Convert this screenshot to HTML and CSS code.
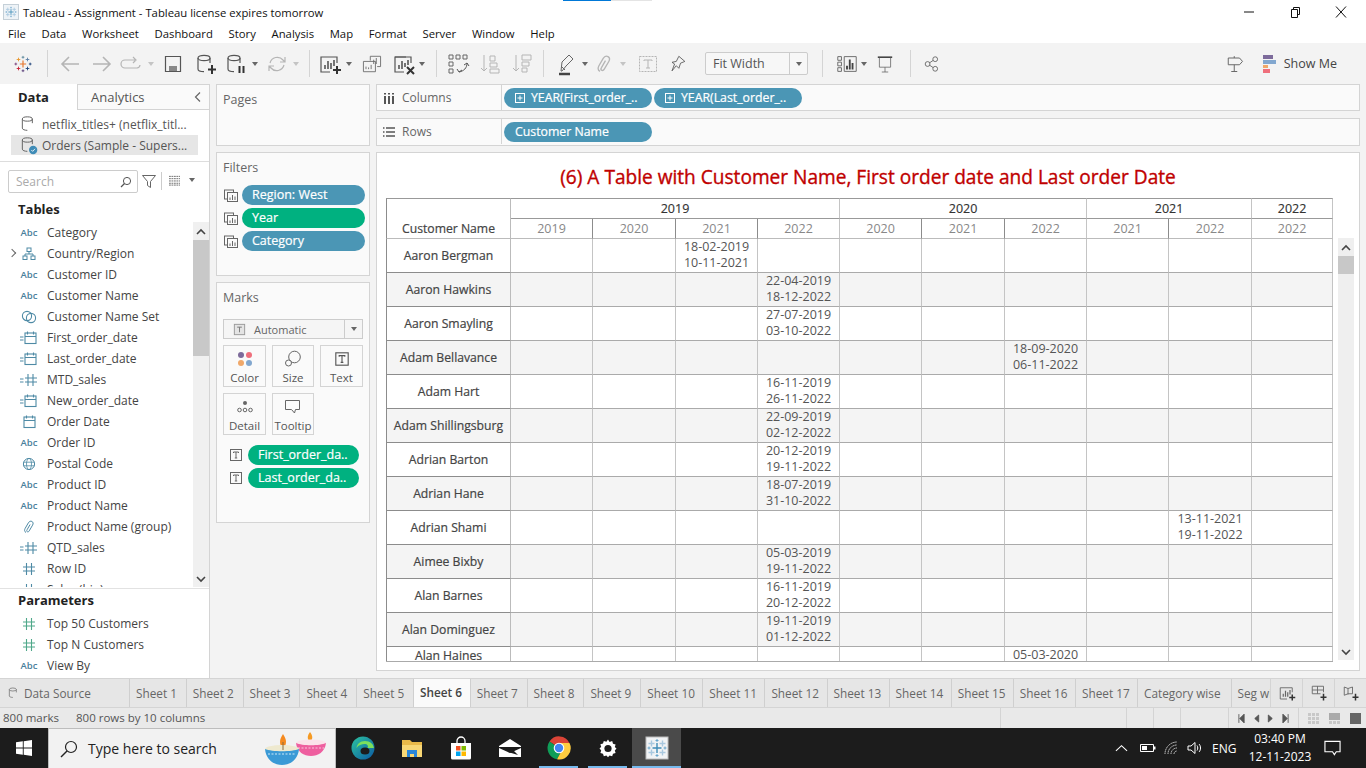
FILE: index.html
```html
<!DOCTYPE html>
<html lang="en">
<head>
<meta charset="utf-8">
<title>Tableau - Assignment</title>
<link rel="stylesheet" href="styles.css">
</head>
<body>
<svg class="defs" aria-hidden="true">
  <symbol id="cyl" viewBox="0 0 24 24"><ellipse cx="10" cy="6" rx="6" ry="2.6" fill="none" stroke="currentColor" stroke-width="1.2"/><path d="M4 6v11c0 1.6 3 2.6 6 2.6M16 6v5" fill="none" stroke="currentColor" stroke-width="1.2"/></symbol>
  <symbol id="cal" viewBox="0 0 18 18"><rect x="4" y="4" width="11" height="10.5" fill="none" stroke="currentColor" stroke-width="1.1"/><path d="M4 7.5h11M6.5 2.5v3M12.5 2.5v3" fill="none" stroke="currentColor" stroke-width="1.1"/></symbol>
  <symbol id="calx" viewBox="0 0 18 18"><rect x="5" y="4" width="11" height="10.5" fill="none" stroke="currentColor" stroke-width="1.1"/><path d="M5 7.5h11M7.5 2.5v3M13.5 2.5v3M0 8h3.5M0 11h3.5" fill="none" stroke="currentColor" stroke-width="1.1"/></symbol>
  <symbol id="hash" viewBox="0 0 18 18"><path d="M6.5 3v12M11.5 3v12M3 7h12M3 11h12" fill="none" stroke="currentColor" stroke-width="1.1"/></symbol>
  <symbol id="hashx" viewBox="0 0 18 18"><path d="M8 3v12M13 3v12M5 7h12M5 11h12M0 8h3.5M0 11h3.5" fill="none" stroke="currentColor" stroke-width="1.1"/></symbol>
  <symbol id="tree" viewBox="0 0 18 18"><rect x="7" y="3" width="4" height="3.5" fill="none" stroke="currentColor"/><rect x="3" y="11" width="4" height="3.5" fill="none" stroke="currentColor"/><rect x="11" y="11" width="4" height="3.5" fill="none" stroke="currentColor"/><path d="M9 6.5V9M5 11V9h8v2" fill="none" stroke="currentColor"/></symbol>
  <symbol id="set" viewBox="0 0 18 18"><circle cx="7" cy="8" r="4.6" fill="none" stroke="currentColor" stroke-width="1.1"/><circle cx="11" cy="10" r="4.6" fill="none" stroke="currentColor" stroke-width="1.1"/></symbol>
  <symbol id="globe" viewBox="0 0 18 18"><circle cx="9" cy="9" r="5.6" fill="none" stroke="currentColor"/><ellipse cx="9" cy="9" rx="2.5" ry="5.6" fill="none" stroke="currentColor" stroke-width=".8"/><path d="M3.5 7.2h11M3.5 10.8h11" fill="none" stroke="currentColor" stroke-width=".8"/></symbol>
  <symbol id="clip" viewBox="0 0 18 18"><path d="M6 14.5c-2-1-1.5-3-.8-4.2l3.2-5.5c1-1.6 2.4-2 3.6-1.3s1.5 2 .6 3.6l-3.4 5.8c-.6 1-1.4 1.2-2 .8s-.6-1.2-.1-2l3-5.2" fill="none" stroke="currentColor"/></symbol>
  <symbol id="filt" viewBox="0 0 16 16"><rect x="1.5" y="3" width="9" height="9" fill="none" stroke="currentColor"/><rect x="4.5" y="5.5" width="10" height="9" fill="#fafafa" stroke="currentColor"/><path d="M7 13V10.5M9.5 13V8M12 13V9.5" stroke="currentColor"/></symbol>
  <symbol id="ticon" viewBox="0 0 16 16"><rect x="2.5" y="2.5" width="11" height="11" fill="none" stroke="currentColor"/><path d="M5.5 6V5h5v1M8 5v6M6.8 11h2.400" fill="none" stroke="currentColor"/></symbol>
  <symbol id="plusbox" viewBox="0 0 12 12"><rect x="1.5" y="1.5" width="9" height="9" fill="none" stroke="currentColor"/><path d="M6 3.5v5M3.5 6h5" stroke="currentColor"/></symbol>
  <symbol id="mini" viewBox="0 0 24 24"><path d="M19 11V5H3v15h9" fill="none" stroke="currentColor" stroke-width="1.2"/><path d="M7 17v-4M10 17V9M13 17v-6M16 14V8" stroke="currentColor" stroke-width="1.6"/><path d="M19 14v8M15 18h8" stroke="#333" stroke-width="2"/></symbol>
  <symbol id="snow" viewBox="0 0 24 24"><path d="M6.500 4.500v6M3.500 7.500h6M17.500 4.500v6M14.500 7.500h6M6.500 13.500v6M3.500 16.500h6M17.500 13.500v6M14.500 16.500h6" stroke="#a9c8df" stroke-width="1.400"/><path d="M12 3v3M10.500 4.500h3M12 18v3M10.500 19.500h3M2.500 12h3M4 10.500v3M18.500 12h3M20 10.500v3" stroke="#6aa6cc"/><path d="M12 7v10M7.500 12h9" stroke="#3f8cb7" stroke-width="1.400"/></symbol>
</svg>

<i class="blue-line"></i><i class="gray-line"></i>

<header class="titlebar">
  <svg class="app-ico" viewBox="0 0 16 16"><rect x=".5" y=".5" width="15" height="15" fill="#eef3f7" stroke="#c5d0d8"/><svg x="1" y="1" width="14" height="14" viewBox="0 0 24 24"><use href="#snow"/></svg></svg>
  <span class="app-title">Tableau - Assignment - Tableau license expires tomorrow</span>
  <span class="win-ctl">
    <svg viewBox="0 0 12 12"><path d="M1 6h10" stroke="#111"/></svg>
    <svg viewBox="0 0 12 12"><path d="M2.500 3.500h6v8h-6zM4.500 3.500V1.500h6v7h-2" fill="none" stroke="#111"/></svg>
    <svg viewBox="0 0 12 12"><path d="M1 .5l10 11M11 .5l-10 11" stroke="#111"/></svg>
  </span>
</header>

<nav class="menubar">
  <span>File</span><span>Data</span><span>Worksheet</span><span>Dashboard</span><span>Story</span><span>Analysis</span><span>Map</span><span>Format</span><span>Server</span><span>Window</span><span>Help</span>
</nav>

<div class="toolbar">
  <svg class="logo" viewBox="0 0 20 20"><path d="M10 6v8M6.500 10h7" stroke="#e8762d" stroke-width="1.300"/><path d="M5 3v4M3 5h4" stroke="#e8962d"/><path d="M15 3v4M13 5h4" stroke="#5a7fa6"/><path d="M5 13v4M3 15h4" stroke="#c72035"/><path d="M15 13v4M13 15h4" stroke="#1f447a"/><path d="M10 1v3M8.500 2.500h3" stroke="#59879b"/><path d="M10 16v3M8.500 17.500h3" stroke="#5a3f7a"/><path d="M2 8.500v3M.5 10h3" stroke="#7b3f7a"/><path d="M18 8.500v3M16.500 10h3" stroke="#1f447a"/></svg>
  <i class="sep"></i>
  <svg class="ic dim m10" viewBox="0 0 24 24"><path d="M21 12H5M11 5l-7 7 7 7" fill="none" stroke="currentColor" stroke-width="1.600"/></svg>
  <svg class="ic dim m8" viewBox="0 0 24 24"><path d="M3 12h16M13 5l7 7-7 7" fill="none" stroke="currentColor" stroke-width="1.600"/></svg>
  <svg class="ic dim m5" viewBox="0 0 24 24"><path d="M16 8H6a3.500 3.500 0 0 0 0 8h12a3.500 3.500 0 0 0 3-3M14 5l3 3-3 3" fill="none" stroke="currentColor" stroke-width="1.200"/></svg>
  <i class="caret dim-c m5"></i>
  <svg class="ic m7" viewBox="0 0 24 24"><path d="M4.500 4.500h15v15h-15z" fill="none" stroke="#555" stroke-width="1.200"/><path d="M8 19v-5h8v5M11 16h4v3h-4z" fill="#888"/></svg>
  <svg class="ic m9" viewBox="0 0 24 24"><use href="#cyl" color="#555"/><path d="M18 13v9M14 17.500h8" stroke="#333" stroke-width="2"/></svg>
  <svg class="ic m6" viewBox="0 0 24 24"><use href="#cyl" color="#555"/><path d="M15.500 14v7M19.500 14v7" stroke="#333" stroke-width="2"/></svg>
  <i class="caret m4"></i>
  <svg class="ic dim m7" viewBox="0 0 24 24"><path d="M5 11a7.500 7.500 0 0 1 13-3l2 2M19 13a7.500 7.500 0 0 1-13 3l-2-2M20 5v5h-5M4 19v-5h5" fill="none" stroke="currentColor" stroke-width="1.200"/></svg>
  <i class="caret dim-c m4"></i>
  <i class="sep m10"></i>
  <svg class="ic m8" viewBox="0 0 24 24"><use href="#mini" color="#555"/></svg>
  <i class="caret m4"></i>
  <svg class="ic m8" viewBox="-2 -2 28 28"><path d="M10 8V3h12v12h-4M2 9h14v12H2z" fill="#f3f3f3" stroke="#666"/><path d="M14 12V7M17 12V5M5 18v-3M8 18v-2M11 18v-5" stroke="#666"/></svg>
  <svg class="ic m8" viewBox="0 0 24 24"><path d="M14 5H3v15h9" fill="none" stroke="#555" stroke-width="1.200"/><path d="M19 11V5H3" fill="none" stroke="#555" stroke-width="1.200"/><path d="M7 17v-4M10 17V9M13 15v-4M16 13V8" stroke="#555" stroke-width="1.600"/><path d="M15 15l7 7M22 15l-7 7" stroke="#333" stroke-width="2"/></svg>
  <i class="caret m3"></i>
  <i class="sep m11"></i>
  <svg class="ic m9" viewBox="0 0 24 24"><path d="M3 3h4v4H3zM10 3h4v4h-4zM17 3h4v4h-4zM3 10h4v4H3zM3 17h4v4H3z" fill="none" stroke="#666"/><path d="M21 11c0 5-3 8-8 9M11 17l2 3 3-2M18 13l3-2 2 3" fill="none" stroke="#555"/></svg>
  <svg class="ic dim m8" viewBox="0 0 24 24"><path d="M6 3v16M3 16l3 3 3-3M12 4h5v5h-5zM12 11h7v4h-7zM12 17h9v4h-9z" fill="none" stroke="currentColor"/></svg>
  <svg class="ic dim m8" viewBox="0 0 24 24"><path d="M6 3v16M3 16l3 3 3-3M12 3h9v5h-9zM12 10h7v4h-7zM12 16h5v4h-5z" fill="none" stroke="currentColor"/></svg>
  <i class="sep m9"></i>
  <svg class="ic m10" viewBox="0 0 24 24"><path d="M8 19l-1 0L8 10l7-7 4 4-7 7zM8 15l3 3" fill="none" stroke="#666"/><path d="M5 22h11" stroke="#444" stroke-width="2.500"/></svg>
  <i class="caret m4"></i>
  <svg class="ic dim m4" viewBox="0 0 24 24"><use href="#clip" color="#b5b5b5"/></svg>
  <i class="caret dim-c m4"></i>
  <svg class="ic dim m10" viewBox="0 0 24 24"><rect x="3.500" y="4.500" width="17" height="15" fill="none" stroke="currentColor" stroke-dasharray="2 1"/><path d="M8 9V8h8v1M12 8v8M10 16h4" fill="none" stroke="currentColor"/></svg>
  <svg class="ic m6" viewBox="-2 -2 28 28"><path d="M13 3l7 6-5 2-2 6-3-3-5 6 3-8-3-2 5-1z" fill="none" stroke="#555"/></svg>
  <div class="fit"><span>Fit Width</span><b><i class="caret"></i></b></div>
  <i class="sep m14"></i>
  <svg class="ic m12" viewBox="-1 -1 26 26"><path d="M2 4h4v4H2zM2 10h4v4H2zM2 16h4v4H2zM9 4h13v16H9z" fill="none" stroke="#666"/><path d="M12 18v-4M15 18V7M18 18v-7" stroke="#444" stroke-width="2"/></svg>
  <i class="caret m2"></i>
  <svg class="ic m6" viewBox="-3 -3 30 30"><path d="M3 3.500h18" stroke="#444" stroke-width="2"/><path d="M5 4v12h14V4M12 16v6M8 22h8" fill="none" stroke="#666"/></svg>
  <i class="sep m13"></i>
  <svg class="ic m9" viewBox="-3 -3 30 30"><circle cx="6.500" cy="12" r="3" fill="none" stroke="#555"/><circle cx="16" cy="6" r="3" fill="none" stroke="#555"/><circle cx="16" cy="18" r="3" fill="none" stroke="#555"/><path d="M9 10.500l4.500-3M9 13.500l4.500 3" stroke="#555"/></svg>
  <svg class="ic push" viewBox="-4 -4 32 32"><path d="M3 4h15l4 4.500-4 4.500H3zM11 1.500V4M11 13v9M7 22h8" fill="none" stroke="#666" stroke-width="1.300"/></svg>
  <span class="showme"><svg viewBox="0 0 14 20"><rect x="0" y="1" width="10" height="4" fill="#7d6b9b"/><rect x="0" y="6" width="13" height="4" fill="#82a7cf"/><rect x="0" y="11" width="5" height="3" fill="#f0a86a"/><rect x="0" y="15" width="7" height="4" fill="#ef6f7c"/></svg>Show Me</span>
</div>

<main class="main">
  <aside class="side">
    <div class="side-tabs"><span class="tab-data">Data</span><span class="tab-an">Analytics<svg viewBox="0 0 10 12"><path d="M7 1.500L2.500 6 7 10.500" fill="none" stroke="#666" stroke-width="1.200"/></svg></span></div>
    <div class="sources">
      <div class="src"><svg viewBox="0 0 24 24"><use href="#cyl" color="#666"/></svg>netflix_titles+ (netflix_titl...</div>
      <div class="src on"><svg viewBox="0 0 24 24"><use href="#cyl" color="#666"/><circle cx="17" cy="18" r="5" fill="#3f8cb7"/><path d="M14.800 18l1.600 1.600 2.800-3" fill="none" stroke="#fff"/></svg>Orders (Sample - Supers...</div>
    </div>
    <div class="search-row">
      <div class="search"><span>Search</span><svg viewBox="0 0 14 14"><circle cx="8" cy="6" r="3.600" fill="none" stroke="#555"/><path d="M5.500 8.500L2 12" stroke="#555" stroke-width="1.300"/></svg></div>
      <svg class="funnel" viewBox="0 0 16 16"><path d="M1.500 2.500h13l-5 6v6l-3-2v-4z" fill="none" stroke="#666"/></svg>
      <i class="vsep"></i>
      <svg class="lines" viewBox="0 0 14 12"><path d="M1 1.500h12M1 4h12M1 6.500h12M1 9h12M1 11h12" stroke="#666" stroke-dasharray="2 .7"/></svg>
      <i class="caret"></i>
    </div>
    <h3 class="sec">Tables</h3>
    <div class="fields">
      <div class="list">
        <div class="f"><b class="ab">Abc</b>Category</div>
        <div class="f ex"><svg viewBox="0 0 18 18"><use href="#tree"/></svg>Country/Region</div>
        <div class="f"><b class="ab">Abc</b>Customer ID</div>
        <div class="f"><b class="ab">Abc</b>Customer Name</div>
        <div class="f"><svg viewBox="0 0 18 18"><use href="#set"/></svg>Customer Name Set</div>
        <div class="f"><svg viewBox="0 0 18 18"><use href="#calx"/></svg>First_order_date</div>
        <div class="f"><svg viewBox="0 0 18 18"><use href="#calx"/></svg>Last_order_date</div>
        <div class="f"><svg viewBox="0 0 18 18"><use href="#hashx"/></svg>MTD_sales</div>
        <div class="f"><svg viewBox="0 0 18 18"><use href="#calx"/></svg>New_order_date</div>
        <div class="f"><svg viewBox="0 0 18 18"><use href="#cal"/></svg>Order Date</div>
        <div class="f"><b class="ab">Abc</b>Order ID</div>
        <div class="f"><svg viewBox="0 0 18 18"><use href="#globe"/></svg>Postal Code</div>
        <div class="f"><b class="ab">Abc</b>Product ID</div>
        <div class="f"><b class="ab">Abc</b>Product Name</div>
        <div class="f"><svg viewBox="0 0 18 18"><use href="#clip"/></svg>Product Name (group)</div>
        <div class="f"><svg viewBox="0 0 18 18"><use href="#hashx"/></svg>QTD_sales</div>
        <div class="f"><svg viewBox="0 0 18 18"><use href="#hash"/></svg>Row ID</div>
        <div class="f"><svg viewBox="0 0 18 18"><use href="#hash"/></svg>Sales (bin)</div>
      </div>
      <div class="sb sb-side">
        <svg viewBox="0 0 12 8"><path d="M2 6l4-4 4 4" fill="none" stroke="#444" stroke-width="1.600"/></svg>
        <i class="thumb"></i>
        <svg class="down" viewBox="0 0 12 8"><path d="M2 2l4 4 4-4" fill="none" stroke="#444" stroke-width="1.600"/></svg>
      </div>
    </div>
    <h3 class="sec params">Parameters</h3>
    <div class="f gr"><svg viewBox="0 0 18 18"><use href="#hash"/></svg>Top 50 Customers</div>
    <div class="f gr"><svg viewBox="0 0 18 18"><use href="#hash"/></svg>Top N Customers</div>
    <div class="f"><b class="ab">Abc</b>View By</div>
  </aside>

  <div class="work">
    <div class="cards">
      <section class="card pages"><h4>Pages</h4></section>
      <section class="card filters"><h4>Filters</h4>
        <div class="frow"><svg viewBox="0 0 16 16"><use href="#filt"/></svg><span class="pill blue">Region: West</span></div>
        <div class="frow"><svg viewBox="0 0 16 16"><use href="#filt"/></svg><span class="pill green">Year</span></div>
        <div class="frow"><svg viewBox="0 0 16 16"><use href="#filt"/></svg><span class="pill blue">Category</span></div>
      </section>
      <section class="card marks"><h4>Marks</h4>
        <div class="mtype"><svg viewBox="0 0 16 16"><rect x="2.500" y="2.500" width="11" height="11" fill="#e4e4e4" stroke="#999"/><path d="M5.500 5.500h5M8 5.500v5.500" stroke="#777"/></svg><span>Automatic</span><b><i class="caret"></i></b></div>
        <div class="mbtns">
          <div class="mb"><svg viewBox="0 0 18 18"><circle cx="5" cy="5" r="3" fill="#7d6b9b"/><circle cx="13" cy="5" r="3" fill="#ef6f7c"/><circle cx="5" cy="13" r="3" fill="#f0a86a"/><circle cx="13" cy="13" r="3" fill="#82a7cf"/></svg>Color</div>
          <div class="mb"><svg viewBox="0 0 18 18"><circle cx="10.500" cy="7" r="5.800" fill="none" stroke="#666"/><circle cx="4.500" cy="13" r="3" fill="#fafafa" stroke="#666"/></svg>Size</div>
          <div class="mb"><svg viewBox="0 0 16 16"><use href="#ticon" color="#555"/></svg>Text</div>
          <div class="mb"><svg viewBox="0 0 18 18"><circle cx="9" cy="5" r="2" fill="#666"/><circle cx="3.500" cy="12" r="1.800" fill="none" stroke="#666"/><circle cx="9" cy="12" r="1.800" fill="none" stroke="#666"/><circle cx="14.500" cy="12" r="1.800" fill="none" stroke="#666"/></svg>Detail</div>
          <div class="mb"><svg viewBox="0 0 18 18"><path d="M1.500 2.500h14v9h-4l-1 3.500-3-3.500h-6z" fill="none" stroke="#666"/></svg>Tooltip</div>
        </div>
        <div class="frow mrow"><svg viewBox="0 0 16 16"><use href="#ticon" color="#666"/></svg><span class="pill green">First_order_da..</span></div>
        <div class="frow mrow"><svg viewBox="0 0 16 16"><use href="#ticon" color="#666"/></svg><span class="pill green">Last_order_da..</span></div>
      </section>
    </div>

    <div class="stage">
      <div class="shelf col"><div class="sl"><svg viewBox="0 0 12 12"><path d="M2 4v8M6 4v8M10 4v8" stroke="#555" stroke-width="2"/><path d="M2 1v1.500M6 1v1.500M10 1v1.500" stroke="#555" stroke-width="2"/></svg>Columns</div>
        <div class="sp"><span class="pill blue w148"><svg viewBox="0 0 12 12"><use href="#plusbox"/></svg>YEAR(First_order_..</span><span class="pill blue w148"><svg viewBox="0 0 12 12"><use href="#plusbox"/></svg>YEAR(Last_order_..</span></div></div>
      <div class="shelf row"><div class="sl"><svg viewBox="0 0 12 12"><path d="M3 2h9M3 6h9M3 10h9M0 2h1.500M0 6h1.500M0 10h1.500" stroke="#555" stroke-width="1.500"/></svg>Rows</div>
        <div class="sp"><span class="pill blue w148 cust">Customer Name</span></div></div>

      <section class="view">
        <h1>(6) A Table with Customer Name, First order date and Last order Date</h1>
        <div class="vbody">
          <div class="tclip">
            <table>
              <colgroup><col class="c0"><col class="n"><col class="w"><col class="n"><col class="n"><col class="n"><col class="w"><col class="n"><col class="n"><col class="w"><col class="l"></colgroup>
              <thead>
                <tr class="h1"><th class="cn" rowspan="2">Customer Name</th><th colspan="4">2019</th><th colspan="3">2020</th><th colspan="2">2021</th><th>2022</th></tr>
                <tr class="h2"><th class="dk">2019</th><th class="dk">2020</th><th class="dk">2021</th><th>2022</th><th class="dk">2020</th><th class="dk">2021</th><th>2022</th><th class="dk">2021</th><th>2022</th><th>2022</th></tr>
              </thead>
              <tbody>
                <tr><th>Aaron Bergman</th><td></td><td></td><td>18-02-2019<br>10-11-2021</td><td></td><td></td><td></td><td></td><td></td><td></td><td></td></tr>
                <tr><th>Aaron Hawkins</th><td></td><td></td><td></td><td>22-04-2019<br>18-12-2022</td><td></td><td></td><td></td><td></td><td></td><td></td></tr>
                <tr><th>Aaron Smayling</th><td></td><td></td><td></td><td>27-07-2019<br>03-10-2022</td><td></td><td></td><td></td><td></td><td></td><td></td></tr>
                <tr><th>Adam Bellavance</th><td></td><td></td><td></td><td></td><td></td><td></td><td>18-09-2020<br>06-11-2022</td><td></td><td></td><td></td></tr>
                <tr><th>Adam Hart</th><td></td><td></td><td></td><td>16-11-2019<br>26-11-2022</td><td></td><td></td><td></td><td></td><td></td><td></td></tr>
                <tr><th>Adam Shillingsburg</th><td></td><td></td><td></td><td>22-09-2019<br>02-12-2022</td><td></td><td></td><td></td><td></td><td></td><td></td></tr>
                <tr><th>Adrian Barton</th><td></td><td></td><td></td><td>20-12-2019<br>19-11-2022</td><td></td><td></td><td></td><td></td><td></td><td></td></tr>
                <tr><th>Adrian Hane</th><td></td><td></td><td></td><td>18-07-2019<br>31-10-2022</td><td></td><td></td><td></td><td></td><td></td><td></td></tr>
                <tr><th>Adrian Shami</th><td></td><td></td><td></td><td></td><td></td><td></td><td></td><td></td><td>13-11-2021<br>19-11-2022</td><td></td></tr>
                <tr><th>Aimee Bixby</th><td></td><td></td><td></td><td>05-03-2019<br>19-11-2022</td><td></td><td></td><td></td><td></td><td></td><td></td></tr>
                <tr><th>Alan Barnes</th><td></td><td></td><td></td><td>16-11-2019<br>20-12-2022</td><td></td><td></td><td></td><td></td><td></td><td></td></tr>
                <tr><th>Alan Dominguez</th><td></td><td></td><td></td><td>19-11-2019<br>01-12-2022</td><td></td><td></td><td></td><td></td><td></td><td></td></tr>
                <tr class="cut"><th>Alan Haines</th><td></td><td></td><td></td><td></td><td></td><td></td><td>05-03-2020</td><td></td><td></td><td></td></tr>
              </tbody>
            </table>
          </div>
          <div class="sb sb-view">
            <svg viewBox="0 0 12 8"><path d="M2 6l4-4 4 4" fill="none" stroke="#444" stroke-width="1.600"/></svg>
            <i class="thumb"></i>
            <svg class="down" viewBox="0 0 12 8"><path d="M2 2l4 4 4-4" fill="none" stroke="#444" stroke-width="1.600"/></svg>
          </div>
        </div>
      </section>
    </div>
  </div>
</main>

<div class="tabs">
  <div class="tablist">
    <span class="t ds"><svg viewBox="0 0 24 24"><use href="#cyl" color="#666"/></svg>Data Source</span><span class="t">Sheet 1</span><span class="t">Sheet 2</span><span class="t">Sheet 3</span><span class="t">Sheet 4</span><span class="t">Sheet 5</span><span class="t on">Sheet 6</span><span class="t">Sheet 7</span><span class="t">Sheet 8</span><span class="t">Sheet 9</span><span class="t">Sheet 10</span><span class="t">Sheet 11</span><span class="t">Sheet 12</span><span class="t">Sheet 13</span><span class="t">Sheet 14</span><span class="t">Sheet 15</span><span class="t">Sheet 16</span><span class="t">Sheet 17</span><span class="t cw">Category wise</span><span class="t">Seg wise</span>
  </div>
  <span class="ta"><svg viewBox="0 0 24 24"><use href="#mini" color="#666"/></svg></span>
  <span class="ta"><svg viewBox="0 0 24 24"><path d="M14 13H3V3h15v8M3 8h15M10 3v10" fill="none" stroke="#666" stroke-width="1.200"/><path d="M18 13v9M14 17.500h8" stroke="#333" stroke-width="2"/></svg></span>
  <span class="ta"><svg viewBox="0 0 24 24"><path d="M3 4l5 2 6-2v9H8l-5 2zM8 6v8" fill="none" stroke="#666" stroke-width="1.200"/><path d="M18 13v9M14 17.500h8" stroke="#333" stroke-width="2"/></svg></span>
</div>

<div class="status">
  <span class="st1">800 marks</span><span class="st2">800 rows by 10 columns</span>
  <i class="st-fill"></i>
  <i class="seg s126"></i><i class="seg s27"></i><i class="seg s27"></i><i class="seg s48"></i>
  <span class="navs">
    <svg viewBox="0 0 8 10"><path d="M1 0v10M7 0v10L2 5z" stroke="#555" fill="#555"/></svg>
    <svg viewBox="0 0 8 10"><path d="M6.500 1v8L2 5z" fill="#555" stroke="#555"/></svg>
    <svg viewBox="0 0 8 10"><path d="M1.500 1v8L6 5z" fill="#555" stroke="#555"/></svg>
    <svg viewBox="0 0 8 10"><path d="M7 0v10M1 0v10l5-5z" stroke="#555" fill="#555"/></svg>
  </span>
  <span class="views">
    <svg viewBox="0 0 11 11"><path d="M0 0h3v3H0zM4 0h3v3H4zM8 0h3v3H8zM0 4h3v3H0zM4 4h3v3H4zM8 4h3v3H8zM0 8h3v3H0zM4 8h3v3H4zM8 8h3v3H8z" fill="#c8c8c8"/></svg>
    <svg viewBox="0 0 11 11"><path d="M0 0h11v7H0z" fill="#aaa"/><path d="M0 8h3v3H0zM4 8h3v3H4zM8 8h3v3H8z" fill="#c8c8c8"/></svg>
    <svg viewBox="0 0 11 11"><path d="M0 0h11v11H0z" fill="#666"/></svg>
  </span>
</div>

<footer class="taskbar">
  <svg class="start" viewBox="0 0 16 16"><path d="M0 2.300l6.800-1v6.200H0zM7.700 1.200L16 0v7.500H7.700zM0 8.500h6.800v6.200l-6.800-1zM7.700 8.500H16V16l-8.300-1.200z" fill="#fff"/></svg>
  <div class="tsearch">
    <svg viewBox="0 0 18 18"><circle cx="11" cy="7" r="5.500" fill="none" stroke="#222" stroke-width="1.200"/><path d="M7 11l-6 6" stroke="#222" stroke-width="1.400"/></svg>
    <span>Type here to search</span>
    <svg class="diya" viewBox="0 0 62 34"><path d="M45 0c3 4 3 7 0 10-3-3-3-6 0-10z" fill="#f59a23"/><ellipse cx="46" cy="11" rx="15" ry="3.500" fill="#fbe3ea"/><path d="M31 11c1 9 8 13 15 13s14-4 15-13c-6 3-24 3-30 0z" fill="#ee5f9f"/><path d="M33 16l26 0" stroke="#fbc6dc" stroke-dasharray="2 1.500"/><path d="M18 2c4 6 4 10 0 15-4-5-4-9 0-15z" fill="#f58a1f"/><ellipse cx="17" cy="17" rx="17" ry="4" fill="#eee9cf"/><path d="M18 10v8" stroke="#8a6a3a"/><path d="M0 17c1 11 9 16 17 16s16-5 17-16c-7 3-27 3-34 0z" fill="#3b9ad6"/><path d="M3 22l28 0" stroke="#cfe9f8" stroke-dasharray="2 1.500"/></svg>
  </div>
  <div class="apps">
    <span class="app"><svg viewBox="0 0 24 24"><defs><linearGradient id="edg" x1="0" y1="0" x2="1" y2="1"><stop offset="0" stop-color="#2cc4a0"/><stop offset="1" stop-color="#0c59a4"/></linearGradient></defs><circle cx="12" cy="12" r="11.500" fill="url(#edg)"/><path d="M23 13c0-5-4-8-9-8-5 0-8 3-8.500 7 2-3 5-4 8-4 3 0 4 2 3 4h6.500z" fill="#7be05c"/><ellipse cx="14" cy="15" rx="4.500" ry="3.500" fill="#1c1c1c"/></svg></span>
    <span class="app"><svg viewBox="0 0 24 24"><path d="M2 4h8l2 2h10v15H2z" fill="#e9b949"/><path d="M2 9h20v12H2z" fill="#f8d775"/><path d="M7 14h10v7h-3v-3h-4v3H7z" fill="#2a86d8"/></svg></span>
    <span class="app"><svg viewBox="0 0 24 24"><path d="M2 7h20v15a1.500 1.500 0 0 1-1.500 1.500h-17A1.500 1.500 0 0 1 2 22z" fill="#fff"/><path d="M8 8V5a4 4 0 0 1 8 0v3" fill="none" stroke="#fff" stroke-width="1.300"/><rect x="7" y="10" width="4.500" height="4.500" fill="#f25022"/><rect x="12.500" y="10" width="4.500" height="4.500" fill="#7fba00"/><rect x="7" y="15.500" width="4.500" height="4.500" fill="#00a4ef"/><rect x="12.500" y="15.500" width="4.500" height="4.500" fill="#ffb900"/></svg></span>
    <span class="app"><svg viewBox="0 0 24 24"><path d="M1 10L12 3l11 7v1H1zM1 12l11 5 11-5v9H1z" fill="#fff"/><path d="M13 12l7 7-10-3z" fill="#1c1c1c"/></svg></span>
    <span class="app run"><svg viewBox="0 0 24 24"><path d="M12 12L2.500 5.500A11.500 11.500 0 0 1 22.500 7H12z" fill="#db4437"/><path d="M12 12l-9.500-6.500A11.500 11.500 0 0 0 10 23.300L15 14z" fill="#0f9d58"/><path d="M12 7h10.500A11.500 11.500 0 0 1 10 23.300L15 14z" fill="#ffcd40"/><circle cx="12" cy="12" r="5.300" fill="#fff"/><circle cx="12" cy="12" r="4.200" fill="#4285f4"/></svg></span>
    <span class="app run"><svg viewBox="0 0 24 24"><path d="M12 3.500l1.600 2.400 2.600-.8.800 2.600 2.600.8-.8 2.600 1.700 1.400-1.700 1.900.8 2.500-2.600.8-.8 2.600-2.600-.8-1.600 1.800-1.600-1.800-2.600.8-.8-2.600-2.600-.8.8-2.500L3.500 12.300l1.700-1.400-.8-2.600 2.600-.8.8-2.600 2.600.8z" fill="#fff"/><circle cx="12" cy="12.500" r="3.600" fill="#1c1c1c"/></svg></span>
    <span class="app run cur"><svg viewBox="0 0 24 24"><rect x="1" y="1" width="22" height="22" fill="#f1f3f5" stroke="#bbb"/><use href="#snow"/></svg></span>
  </div>
  <div class="tray">
    <svg viewBox="0 0 14 8"><path d="M1 7l6-5.500L13 7" fill="none" stroke="#fff" stroke-width="1.200"/></svg>
    <svg class="bat" viewBox="0 0 16 10"><path d="M.5 1.500h13v7H.5z" fill="none" stroke="#fff"/><path d="M2 3h5v4H2zM14 3.500h1.500v3H14z" fill="#fff"/></svg>
    <svg class="wifi" viewBox="0 0 14 14"><path d="M1 13A12 12 0 0 1 13 1M4 13a9 9 0 0 1 9-9M7 13a6 6 0 0 1 6-6M10 13a3 3 0 0 1 3-3" fill="none" stroke="#ccc" stroke-dasharray="1.500 .5"/></svg>
    <svg class="vol" viewBox="0 0 16 14"><path d="M1 5h3l4-3.500v11L4 9H1zM10 4.500c1 1.500 1 3.500 0 5M12 3c2 2 2 6 0 8" fill="none" stroke="#fff"/></svg>
    <span class="eng">ENG</span>
    <span class="clock">03:40 PM<br>12-11-2023</span>
    <svg class="note" viewBox="0 0 18 16"><path d="M1 1h16v11h-4l-2 3-2-3H1z" fill="none" stroke="#fff" stroke-width="1.200"/></svg>
  </div>
</footer>
</body>
</html>
```

FILE: styles.css
```css
* { box-sizing: border-box; }
html, body { margin: 0; padding: 0; }
body {
  width: 1366px; height: 768px; overflow: hidden; position: relative;
  background: #fff; color: #333;
  font-family: "Open Sans", "Liberation Sans", sans-serif; font-size: 12px;
  display: flex; flex-direction: column;
}
.defs { position: absolute; width: 0; height: 0; }
svg { display: block; flex: none; }
i { display: block; flex: none; }
h1, h3, h4 { margin: 0; }

.blue-line { position: absolute; left: 563px; top: 0; width: 48px; height: 1px; background: #0078d7; }
.gray-line { position: absolute; left: 611px; top: 0; width: 41px; height: 1px; background: #e4e4e4; }

.titlebar { height: 23px; display: flex; align-items: center; padding: 1px 0 0 3px; flex: none; }
.app-ico { width: 16px; height: 16px; margin-right: 4px; }
.app-title { font-size: 11.3px; color: #111; }
.win-ctl { margin-left: auto; display: flex; gap: 34px; padding-right: 19px; }
.win-ctl svg { width: 12px; height: 12px; }

.menubar { height: 20px; display: flex; align-items: center; flex: none; color: #111; font-size: 11.3px; padding-left: 8px; gap: 15.7px; }

.toolbar { height: 41px; background: #f3f3f3; display: flex; align-items: center; flex: none; padding-right: 29px; color: #b5b5b5; }
.logo { width: 18px; height: 18px; margin: 0 15px 0 14px; }
.sep { width: 1px; height: 27px; background: #d4d4d4; }
.ic { width: 24px; height: 24px; }
.dim { color: #b5b5b5; }
.caret { width: 0; height: 0; border-left: 3.5px solid transparent; border-right: 3.5px solid transparent; border-top: 4px solid #666; }
.dim-c { border-top-color: #c4c4c4; }
.m2 { margin-left: 2px; } .m3 { margin-left: 3px; } .m4 { margin-left: 4px; } .m5 { margin-left: 5px; }
.m6 { margin-left: 6px; } .m7 { margin-left: 7px; } .m8 { margin-left: 8px; } .m9 { margin-left: 9px; }
.m10 { margin-left: 10px; } .m11 { margin-left: 11px; } .m12 { margin-left: 12px; } .m13 { margin-left: 13px; } .m14 { margin-left: 14px; }
.fit { width: 103px; height: 23px; margin-left: 15px; border: 1px solid #ccc; border-radius: 2px; background: #f7f7f7; display: flex; align-items: center; color: #555; font-size: 12.5px; }
.fit span { flex: 1; padding-left: 7px; }
.fit b { width: 18px; height: 100%; border-left: 1px solid #ccc; display: flex; align-items: center; justify-content: center; }
.push { margin-left: auto; }
.showme { display: flex; align-items: center; margin-left: 16px; color: #444; font-size: 12.5px; gap: 7px; }
.showme svg { width: 14px; height: 20px; }

.main { flex: 1; min-height: 0; display: flex; background: #f3f3f3; }
.side { width: 210px; flex: none; background: #fff; border-right: 1px solid #d4d4d4; }
.side-tabs { height: 26px; display: flex; }
.tab-data { width: 77px; display: flex; align-items: center; padding-left: 18px; font-weight: 700; font-size: 13px; color: #222; background: #fff; }
.tab-an { flex: 1; display: flex; align-items: center; justify-content: space-between; padding: 0 6px 0 13px; font-size: 13px; color: #555; background: #fafafa; border: 1px solid #d4d4d4; border-right: 0; }
.tab-an svg { width: 10px; height: 12px; }
.sources { height: 52px; padding-top: 4px; border-bottom: 1px solid #ddd; }
.src { height: 20px; margin: 0 11px; display: flex; align-items: center; gap: 3px; padding-left: 8px; color: #555; font-size: 12px; white-space: nowrap; }
.src svg { width: 20px; height: 20px; }
.src.on { background: #e6e6e6; margin-top: 1px; }
.search-row { height: 39px; padding: 8px 0 0 8px; display: flex; align-items: flex-start; }
.search { width: 130px; height: 23px; border: 1px solid #ccc; border-radius: 2px; display: flex; align-items: center; justify-content: space-between; padding: 0 4px 0 7px; color: #aaa; font-size: 12px; }
.search svg { width: 14px; height: 14px; }
.funnel { width: 16px; height: 16px; margin: 3px 0 0 3px; }
.vsep { width: 1px; height: 18px; background: #ccc; margin: 2px 0 0 4px; }
.lines { width: 13px; height: 11px; margin: 5px 0 0 6px; }
.search-row .caret { margin: 8px 0 0 8px; }
.sec { font-size: 13px; font-weight: 700; color: #222; height: 21px; padding-left: 18px; line-height: 16px; }
.fields { height: 365px; display: flex; overflow: hidden; }
.list { flex: 1; min-width: 0; overflow: hidden; }
.f { height: 21px; display: flex; align-items: center; padding-left: 18px; color: #444; font-size: 12px; white-space: nowrap; position: relative; }
.f svg, .ab { width: 22px; margin-right: 7px; flex: none; color: #4e8aa5; text-align: center; }
.f svg { height: 18px; padding: 0 2px; }
.ab { font-size: 9.5px; font-weight: 600; color: #4b7f9c; }
.ex::before { content: ""; position: absolute; left: 9px; top: 7px; width: 5px; height: 5px; border-top: 1px solid #666; border-right: 1px solid #666; transform: rotate(45deg); }
.gr svg { color: #4fa88a; }
.sb { background: #f0f0f0; display: flex; flex-direction: column; align-items: center; }
.sb svg { width: 12px; height: 8px; margin: 6px 0 4px; }
.sb .down { margin: auto 0 4px; }
.thumb { background: #c8c8c8; width: 100%; }
.sb-side { width: 16px; margin-right: 0; }
.sb-side .thumb { height: 116px; }
.params { margin-top: 1px; height: 25px; border-top: 1px solid #e2e2e2; padding-top: 3px; }

.work { flex: 1; min-width: 0; display: flex; gap: 6px; padding: 0 6px 7px 6px; }
.cards { width: 154px; flex: none; display: flex; flex-direction: column; }
.card { background: #fafafa; border: 1px solid #d4d4d4; padding: 6px 6px 0; }
.card h4 { font-weight: 400; font-size: 12.5px; color: #666; line-height: 18px; height: 18px; }
.pages { height: 62px; }
.filters { height: 124px; margin-top: 6px; }
.filters h4 { margin-bottom: 6px; }
.filters .frow { margin-right: -2px; padding-left: 0; }
.marks { height: 241px; margin-top: 6px; }
.frow { display: flex; align-items: center; height: 23px; gap: 2px; padding-left: 1px; }
.frow svg { width: 16px; height: 16px; color: #666; margin-right: 1px; }
.pill { display: flex; align-items: center; height: 20px; border-radius: 10px; color: #fff; font-size: 12.5px; flex: 1; padding-left: 10px; white-space: nowrap; overflow: hidden; -webkit-text-stroke: .2px #fff; }
.blue { background: #4b96b5; }
.green { background: #00b180; }
.mtype { height: 20px; margin-top: 12px; border: 1px solid #ccc; background: #f5f5f5; display: flex; align-items: center; font-size: 11px; color: #666; }
.mtype svg { width: 15px; height: 15px; margin: 0 7px 0 8px; }
.mtype span { flex: 1; }
.mtype b { width: 18px; height: 100%; border-left: 1px solid #ccc; display: flex; align-items: center; justify-content: center; }
.mbtns { display: grid; grid-template-columns: 43px 42px 43px; gap: 6px; margin-top: 6px; }
.mb { height: 42px; border: 1px solid #d4d4d4; display: flex; flex-direction: column; align-items: center; justify-content: space-between; padding: 4px 0 1px; font-size: 11.5px; color: #555; background: #fafafa; }
.mb svg { width: 18px; height: 18px; }
.mrow { padding-left: 5px; margin-top: 0; }
.mrow svg { margin-right: 1px; }
.mbtns + .mrow { margin-top: 8px; }
.mrow .pill { flex: none; width: 111px; margin-left: 1px; }

.stage { flex: 1; min-width: 0; display: flex; flex-direction: column; }
.shelf { display: flex; background: #fafafa; border: 1px solid #d4d4d4; }
.col { height: 27px; }
.row { height: 28px; margin-top: 7px; padding-bottom: 1px; }
.sl { width: 125px; border-right: 1px solid #d4d4d4; display: flex; align-items: center; gap: 7px; padding-left: 6px; color: #666; font-size: 12px; }
.sl svg { width: 12px; height: 12px; }
.sp { display: flex; align-items: center; gap: 2px; padding-left: 2px; }
.w148 { flex: none; width: 148px; padding-left: 10px; gap: 5px; font-size: 12.3px; }
.w148 svg { width: 12px; height: 12px; color: #fff; }
.cust { padding-left: 11px; }

.view { flex: 1; min-height: 0; margin-top: 6px; background: #fff; border: 1px solid #d4d4d4; padding: 12px 0 0 9px; display: flex; flex-direction: column; }
.view h1 { text-align: center; color: #c00000; font-size: 19.1px; font-weight: 400; -webkit-text-stroke: .35px #c00000; line-height: 25px; height: 25px; margin: 0 0 8px -9px; white-space: nowrap; }
.vbody { display: flex; }
.tclip { width: 947px; height: 464px; overflow: hidden; border-bottom: 1px solid #aaa; flex: none; }
table { border-collapse: separate; border-spacing: 0; table-layout: fixed; width: 947px; font-size: 12.5px; }
.c0 { width: 125px; } .n { width: 82px; } .w { width: 83px; } .l { width: 81px; }
th, td { padding: 0; border-right: 1px solid #c4c4c4; border-bottom: 1px solid #aaa; text-align: center; font-weight: 400; line-height: 16px; white-space: nowrap; }
.h1 th { height: 21px; border-top: 1px solid #999; border-bottom-color: #999; color: #333; -webkit-text-stroke: .15px #333; }
.h2 th { height: 20px; color: #888; border-bottom: 1px solid #bbb; }
.h2 th.dk { border-right-color: #8c8c8c; }
.cn, tbody th { border-left: 1px solid #8c8c8c; border-right: 1px solid #bbb; font-size: 12.2px; -webkit-text-stroke: .2px #444; }
.h1 .cn { color: #444; vertical-align: bottom; padding-bottom: 1px; border-bottom-color: #bbb; -webkit-text-stroke: .2px #444; }
tbody tr { height: 34px; }
tbody th { border-bottom-color: #8c8c8c; color: #444; }
tbody td { color: #555; padding-bottom: 1px; }
tbody tr:nth-child(even) th, tbody tr:nth-child(even) td { background: #f4f4f4; }
.cut th, .cut td { vertical-align: top; }
.cut th { padding-top: 1px; }
.sb-view { width: 16px; height: 422px; margin: 40px 0 0 5px; background: #efefef; }
.sb-view .thumb { height: 18px; }

.tabs { height: 30px; flex: none; background: #e6e6e6; display: flex; border-top: 1px solid #d4d4d4; border-bottom: 1px solid #d4d4d4; }
.tablist { width: 1270px; display: flex; overflow: hidden; flex: none; }
.t { flex: none; min-width: 56.8px; display: flex; align-items: center; height: 100%; padding: 0 7.4px 0 6px; border-right: 1px solid #cfcfcf; font-size: 11.8px; color: #666; white-space: nowrap; }
.ds { width: 130px; padding-left: 7px; gap: 3px; }
.ds svg { width: 14px; height: 14px; }
.t.on { background: #fafafa; font-weight: 600; color: #444; padding-bottom: 2px; }
.cw { padding-right: 10px; }
.ta { width: 32px; display: flex; align-items: center; justify-content: center; border-left: 1px solid #d4d4d4; }
.ta svg { width: 18px; height: 18px; }

.status { height: 20px; flex: none; background: #e9e9e9; display: flex; align-items: stretch; font-size: 11.5px; color: #555; line-height: 20px; }
.st1 { margin-left: 3px; width: 73px; }
.st2 { width: 190px; }
.st-fill { flex: 1; }
.seg { border-left: 1px solid #d4d4d4; }
.s126 { width: 126px; } .s27 { width: 27px; } .s48 { width: 48px; }
.navs { width: 70px; border-left: 1px solid #d4d4d4; display: flex; align-items: center; justify-content: space-around; padding: 0 5px; }
.navs svg { width: 7px; height: 9px; }
.views { width: 68px; border-left: 1px solid #d4d4d4; display: flex; align-items: center; gap: 10px; padding-left: 9px; }
.views svg { width: 11px; height: 11px; }

.taskbar { height: 40px; flex: none; background: #1c1c1c; display: flex; align-items: stretch; }
.start { width: 16px; height: 16px; margin: 12px 16px 0 16px; }
.tsearch { width: 288px; background: #f2f2f2; border: 1px solid #bdbdbd; border-bottom: 0; display: flex; align-items: center; padding-left: 11px; font-size: 14px; color: #222; position: relative; }
.tsearch > svg { width: 18px; height: 18px; margin-right: 10px; }
.tsearch .diya { position: absolute; left: 216px; top: 3px; width: 62px; height: 34px; margin: 0; }
.apps { display: flex; margin-left: 2px; }
.app { width: 49px; display: flex; align-items: center; justify-content: center; position: relative; }
.app svg { width: 24px; height: 24px; }
.run::after { content: ""; position: absolute; left: 5px; right: 5px; bottom: 0; height: 2px; background: #76b9ed; }
.cur { background: #4a4a4a; }
.cur::after { left: 0; right: 0; }
.tray { margin-left: auto; display: flex; align-items: center; color: #fff; font-size: 12px; }
.tray > svg:first-child { width: 13px; height: 8px; }
.bat { width: 16px; height: 10px; margin-left: 12px; }
.wifi { width: 14px; height: 14px; margin-left: 8px; }
.vol { width: 16px; height: 14px; margin-left: 9px; }
.eng { margin-left: 9px; width: 34px; }
.clock { width: 68px; text-align: center; line-height: 18px; }
.note { width: 17px; height: 16px; margin: 0 25px 0 10px; }
```
